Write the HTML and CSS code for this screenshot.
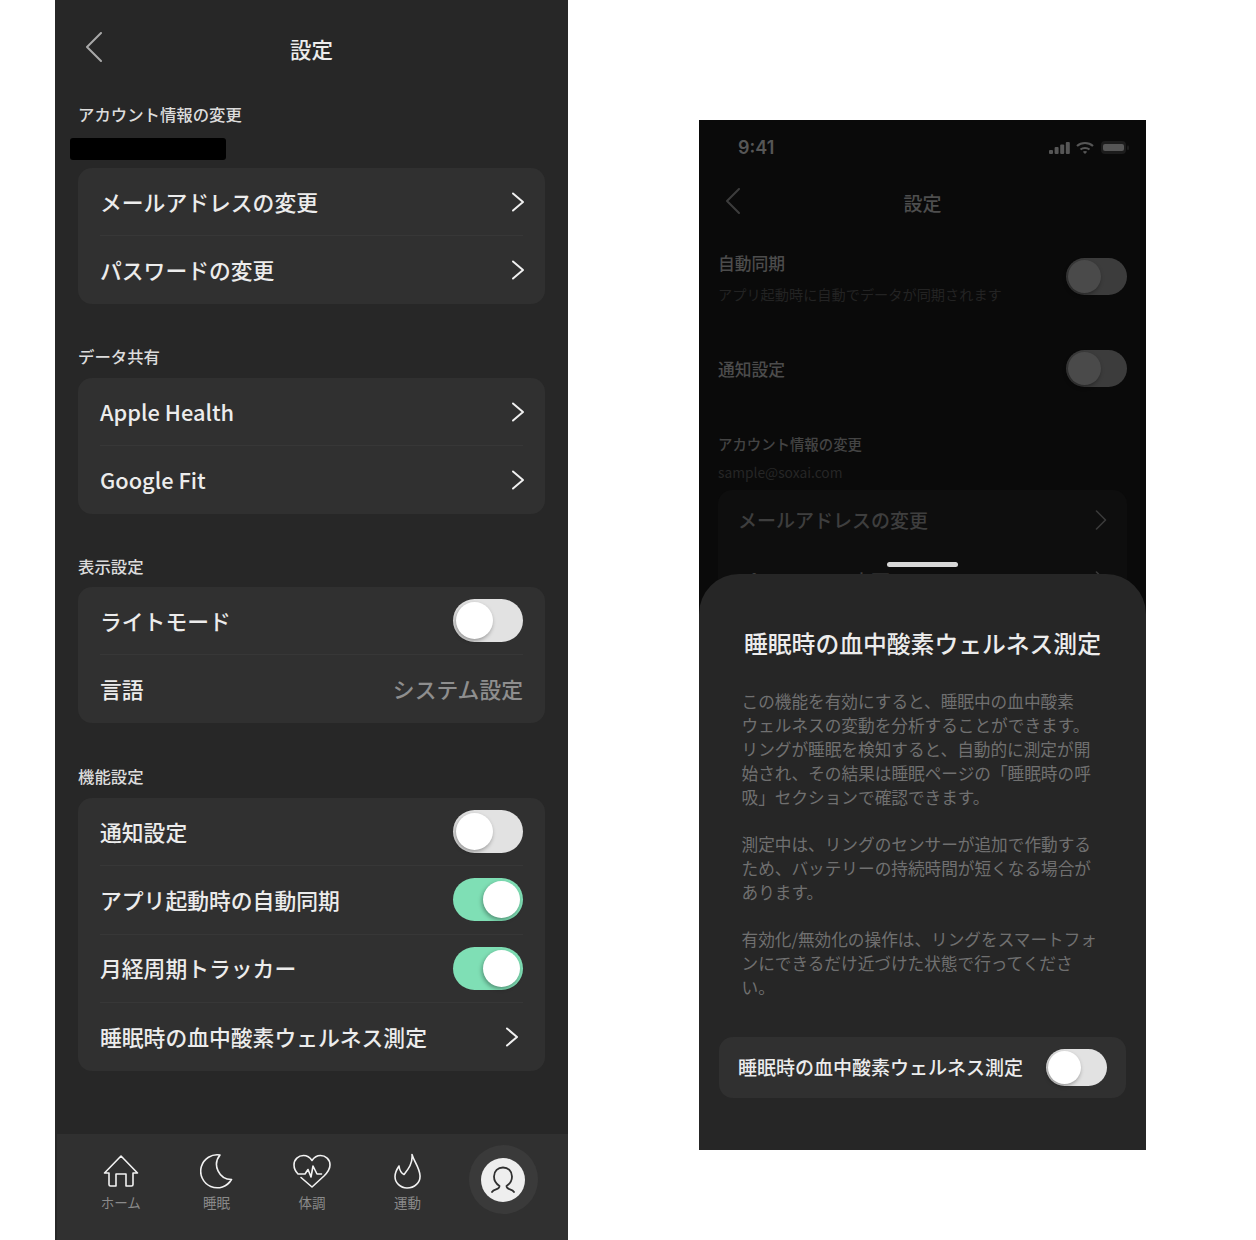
FILE: index.html
```html
<!DOCTYPE html>
<html lang="ja">

<head>
	<meta charset="UTF-8">
	<meta name="viewport" content="width=device-width, initial-scale=1.0">
	<title>設定</title>
	<link rel="stylesheet" href="styles.css">
</head>

<body>
	<!-- 左の設定画面 -->
	<div class="phone main-phone">
		<div class="topbar">
			<svg class="back" width="17" height="30" viewBox="0 0 17 30"><path d="M16 1 2 15l14 14"/></svg>
			<h1>設定</h1>
		</div>

		<div class="section first">
			<h2>アカウント情報の変更</h2>
			<div class="redacted"></div>
			<ul class="card">
				<li><span class="name">メールアドレスの変更</span><svg class="chev" width="14" height="20" viewBox="0 0 14 20"><path d="M2 1.500 12 10 2 18.500"/></svg></li>
				<li><span class="name">パスワードの変更</span><svg class="chev" width="14" height="20" viewBox="0 0 14 20"><path d="M2 1.500 12 10 2 18.500"/></svg></li>
			</ul>
		</div>

		<div class="section">
			<h2>データ共有</h2>
			<ul class="card">
				<li><span class="name">Apple Health</span><svg class="chev" width="14" height="20" viewBox="0 0 14 20"><path d="M2 1.500 12 10 2 18.500"/></svg></li>
				<li><span class="name">Google Fit</span><svg class="chev" width="14" height="20" viewBox="0 0 14 20"><path d="M2 1.500 12 10 2 18.500"/></svg></li>
			</ul>
		</div>

		<div class="section tight">
			<h2>表示設定</h2>
			<ul class="card">
				<li><span class="name">ライトモード</span><span class="toggle"><i></i></span></li>
				<li><span class="name">言語</span><span class="name value">システム設定</span></li>
			</ul>
		</div>

		<div class="section wide">
			<h2>機能設定</h2>
			<ul class="card long">
				<li><span class="name">通知設定</span><span class="toggle"><i></i></span></li>
				<li><span class="name">アプリ起動時の自動同期</span><span class="toggle on"><i></i></span></li>
				<li><span class="name">月経周期トラッカー</span><span class="toggle on"><i></i></span></li>
				<li><span class="name">睡眠時の血中酸素ウェルネス測定</span><svg class="chev inset" width="14" height="20" viewBox="0 0 14 20"><path d="M2 1.500 12 10 2 18.500"/></svg></li>
			</ul>
		</div>

		<div class="tabbar">
			<div class="tab">
				<svg width="36" height="33" viewBox="0 0 36 33"><path d="M7.500 31.500H13V19.500h10v12h5.500a1.500 1.500 0 0 0 1.500-1.500V18.500h4.500L18 1.500 1.500 18.500H6V30a1.500 1.500 0 0 0 1.500 1.500z"/></svg>
				<span>ホーム</span>
			</div>
			<div class="tab">
				<svg width="33" height="35" viewBox="0 0 33 35"><path d="M20 1.500A16.500 16.500 0 1 0 31.500 26 15 15 0 0 1 20 1.500z"/></svg>
				<span>睡眠</span>
			</div>
			<div class="tab">
				<svg width="38" height="34" viewBox="0 0 38 34"><path d="M8 23.500 19 33l12-11c4-4 6-7.500 6-11 0-5.500-4.500-9.500-9.500-9.500C24 1.500 21 3.500 19 6.500 17 3.500 14 1.500 10.500 1.500 5.500 1.500 1 5.500 1 11c0 3.500 1.500 6.500 4 9h7l3-4.500L18 23l2-11 4 8h4.500"/></svg>
				<span>体調</span>
			</div>
			<div class="tab">
				<svg width="27" height="36" viewBox="0 0 27 36"><path d="M18 1.500c2 7 7.500 13 8 21 .5 7-5.500 12.500-13 12.500-6.500 0-12-5-12-11.500 0-4 2-7.500 4-10.500.5 4 2 7 5 8.500 4-5 9-11 8-20z"/></svg>
				<span>運動</span>
			</div>
			<div class="tab">
				<div class="avatar">
					<div class="avatar-inner">
						<svg width="24" height="27" viewBox="0 0 24 27"><path d="M1 26c2-3.500 7.500-2 7.500-6C4.500 17.500 3 13.500 3 10.500 3 5 7 1.500 12 1.500S21 5 21 10.500c0 3-1.500 7-5.500 9.500 0 4 5.500 2.500 7.500 6"/></svg>
					</div>
				</div>
			</div>
		</div>
	</div>

	<!-- 右のモーダル画面 -->
	<div class="phone modal-phone">
		<div class="statusbar">
			<span class="time">9:41</span>
			<svg width="80" height="16" viewBox="0 0 80 16">
				<rect x="0" y="11" width="4" height="4" rx="1"/>
				<rect x="5.600" y="8" width="4" height="7" rx="1"/>
				<rect x="11.200" y="5.500" width="4" height="9.500" rx="1"/>
				<rect x="16.800" y="3" width="4" height="12" rx="1"/>
				<path class="wifi" d="M28 7c4.500-4 11.500-4 16 0M31.500 10.500c2.500-2 6.500-2 9 0"/>
				<path class="wifi-dot" d="M36 15 33.800 12.800c1.200-1 3.200-1 4.400 0z"/>
				<rect class="batt-bg" x="52" y="2" width="25" height="13" rx="4"/>
				<rect class="batt-bg" x="78" y="6.500" width="2" height="4.500" rx="1"/>
				<rect x="54" y="5" width="21" height="7" rx="2"/>
			</svg>
		</div>
		<div class="topbar small">
			<svg class="back" width="14" height="26" viewBox="0 0 14 26"><path d="M13 1 1 13l12 12"/></svg>
			<h1>設定</h1>
		</div>

		<div class="dim-row sync">
			<div>
				<div class="dim-title">自動同期</div>
				<div class="dim-sub">アプリ起動時に自動でデータが同期されます</div>
			</div>
			<span class="toggle dim"><i></i></span>
		</div>
		<div class="dim-row notify">
			<div class="dim-title">通知設定</div>
			<span class="toggle dim"><i></i></span>
		</div>

		<div class="dim-label">アカウント情報の変更</div>
		<div class="dim-mail">sample@soxai.com</div>
		<ul class="dim-card">
			<li>メールアドレスの変更<svg width="12" height="20" viewBox="0 0 12 20"><path d="M1.500 1 10.500 10 1.500 19"/></svg></li>
			<li>パスワードの変更<svg width="12" height="20" viewBox="0 0 12 20"><path d="M1.500 1 10.500 10 1.500 19"/></svg></li>
		</ul>

		<div class="handle"></div>
		<div class="sheet">
			<h3>睡眠時の血中酸素ウェルネス測定</h3>
			<div class="sheet-text">
				<p>この機能を有効にすると、睡眠中の血中酸素<br>ウェルネスの変動を分析することができます。<br>リングが睡眠を検知すると、自動的に測定が開<br>始され、その結果は睡眠ページの「睡眠時の呼<br>吸」セクションで確認できます。</p>
				<p>測定中は、リングのセンサーが追加で作動する<br>ため、バッテリーの持続時間が短くなる場合が<br>あります。</p>
				<p>有効化/無効化の操作は、リングをスマートフォ<br>ンにできるだけ近づけた状態で行ってくださ<br>い。</p>
			</div>
			<div class="sheet-row">
				<span class="sheet-name">睡眠時の血中酸素ウェルネス測定</span>
				<span class="toggle mid"><i></i></span>
			</div>
		</div>
	</div>
</body>

</html>
```

FILE: styles.css
```css
* {
	margin: 0;
	padding: 0;
	box-sizing: border-box;
}

body {
	display: flex;
	align-items: flex-start;
	background: #fff;
	font-family: "Noto Sans CJK JP", "Noto Sans", sans-serif;
	color: #ececec;
}

li {
	list-style: none;
}

svg path {
	fill: none;
	stroke-linecap: round;
	stroke-linejoin: round;
}

.phone {
	flex: none;
	overflow: hidden;
}

.main-phone {
	width: 513px;
	height: 1240px;
	margin-left: 55px;
	display: flex;
	flex-direction: column;
	background: #272727;
}

.modal-phone {
	position: relative;
	width: 447px;
	height: 1030px;
	margin-left: 131px;
	margin-top: 120px;
	padding: 0 19px;
	background: #0a0a0a;
}

/* ヘッダー */
.topbar {
	height: 103px;
	padding: 0 31px 6px;
	display: grid;
	grid-template-columns: 1fr auto 1fr;
	align-items: center;
}

.topbar h1 {
	font-size: 21.5px;
	line-height: 30px;
	font-weight: 500;
}

.topbar .back {
	margin: -4px 0 0 -1px;
}

.topbar .back path {
	stroke: #a8a8a8;
	stroke-width: 2;
}

.topbar.small {
	height: 60px;
	padding: 0 0 2px 8px;
	margin: 0 8px 0 0;
}

.topbar.small h1 {
	font-size: 19px;
	color: #4e4e4e;
}

.topbar.small .back {
	margin: -4px 0 0;
}

.topbar.small .back path {
	stroke: #3c3c3c;
}

/* セクション */
.section {
	margin-top: 41px;
	padding: 0 23px;
}

.section.first {
	margin-top: 0;
}

.section.wide {
	margin-top: 42px;
}

.section h2 {
	font-size: 16.4px;
	line-height: 22px;
	font-weight: 500;
	color: #dcdcdc;
	margin-bottom: 11px;
}

.section.tight h2 {
	margin-bottom: 10px;
}

.redacted {
	width: 156px;
	height: 22px;
	margin: 13px 0 8px -8px;
	background: #000;
	border-radius: 3px;
}

.card {
	background: #303030;
	border-radius: 14px;
}

.card li {
	height: 68px;
	margin: 0 22px;
	display: flex;
	align-items: center;
	justify-content: space-between;
	font-size: 21.8px;
	white-space: nowrap;
	border-bottom: 1px solid #373737;
}

.card li:last-child {
	border-bottom: 0;
}

.card.long li {
	height: 68.3px;
}

.name {
	padding-bottom: 1px;
	font-weight: 500;
}

.chev {
	margin-right: -2px;
}

.chev path {
	stroke: #f0f0f0;
	stroke-width: 2;
}

.chev.inset {
	margin-right: 4px;
}

.value {
	color: #8e8e8e;
}

/* トグル */
.toggle {
	flex: none;
	width: 70px;
	height: 43px;
	padding: 3px;
	display: flex;
	border-radius: 22px;
	background: #e2e2e2;
}

.toggle i {
	width: 37px;
	height: 37px;
	border-radius: 50%;
	background: #fff;
	box-shadow: -1px 2px 4px rgba(0, 0, 0, 0.35);
}

.toggle.on {
	justify-content: flex-end;
	background: #7fdfb5;
}

.toggle.mid,
.toggle.dim {
	width: 61px;
	height: 37px;
	padding: 2px;
	border-radius: 19px;
}

.toggle.mid i,
.toggle.dim i {
	width: 33px;
	height: 33px;
}

.toggle.dim {
	background: #3c3c3c;
}

.toggle.dim i {
	background: #4a4a4a;
}

/* タブバー */
.tabbar {
	margin: auto 0 0 2px;
	height: 106px;
	padding: 19px 17px 0 16px;
	display: grid;
	grid-template-columns: repeat(5, 1fr);
	background: #303030;
}

.tab {
	display: flex;
	flex-direction: column;
	align-items: center;
}

.tab > svg {
	height: 36px;
	margin-bottom: 3px;
}

.tab > svg path {
	stroke: #f2f2f2;
	stroke-width: 1.6;
}

.tab span {
	font-size: 13.5px;
	line-height: 20px;
	color: #8a8a8a;
}

.avatar {
	width: 69px;
	height: 69px;
	margin-top: -8px;
	border-radius: 50%;
	background: #3a3a3a;
	display: flex;
	align-items: center;
	justify-content: center;
}

.avatar-inner {
	width: 44px;
	height: 44px;
	border-radius: 50%;
	background: #eeeeee;
	display: flex;
	align-items: center;
	justify-content: center;
}

.avatar-inner path {
	stroke: #303030;
	stroke-width: 1.8;
}

/* 右画面: 暗くなった背景 */
.statusbar {
	height: 54px;
	padding: 0 0 0 20px;
	display: flex;
	align-items: center;
	justify-content: space-between;
}

.statusbar .time {
	font-family: Inter, "Liberation Sans", sans-serif;
	font-size: 18px;
	font-weight: 600;
	color: #565656;
}

.statusbar svg {
	margin-right: -2px;
	fill: #565656;
}

.statusbar svg .wifi {
	stroke: #565656;
	stroke-width: 2.2;
	stroke-linecap: butt;
}

.statusbar svg .wifi-dot {
	fill: #565656;
}

.statusbar svg .batt-bg {
	fill: #1c1c1c;
}

.dim-row {
	display: flex;
	justify-content: space-between;
}

.dim-row.sync {
	margin-top: 18px;
}

.dim-row.sync .toggle {
	margin-top: 6px;
}

.dim-row.notify {
	margin-top: 46px;
	align-items: center;
}

.dim-title {
	font-size: 16.8px;
	line-height: 22px;
	font-weight: 500;
	color: #4c4c4c;
}

.dim-sub {
	margin-top: 10px;
	font-size: 14.2px;
	line-height: 20px;
	color: #232323;
}

.dim-label {
	margin-top: 45px;
	font-size: 14.4px;
	line-height: 24px;
	font-weight: 500;
	color: #444;
}

.dim-mail {
	margin-top: 7px;
	font-size: 13.8px;
	line-height: 18px;
	color: #262626;
}

.dim-card {
	margin-top: 9px;
	background: #0e0e0e;
	border-radius: 14px;
}

.dim-card li {
	height: 61px;
	padding: 0 20px 2px;
	display: flex;
	align-items: center;
	justify-content: space-between;
	font-size: 19px;
	font-weight: 500;
	color: #3e3e3e;
}

.dim-card path {
	stroke: #3a3a3a;
	stroke-width: 1.6;
}

/* 右画面: ボトムシート */
.handle {
	position: absolute;
	top: 442px;
	left: 188px;
	width: 71px;
	height: 5px;
	border-radius: 3px;
	background: #d8d8d8;
}

.sheet {
	position: absolute;
	top: 454px;
	left: 0;
	right: 0;
	bottom: 0;
	padding-top: 52px;
	background: #262626;
	border-radius: 40px 40px 0 0;
}

.sheet h3 {
	font-size: 23.8px;
	line-height: 34px;
	font-weight: 500;
	text-align: center;
	white-space: nowrap;
}

.sheet-text {
	margin: 29px 0 0 42.5px;
	font-size: 16.65px;
	line-height: 24px;
	color: #707070;
	white-space: nowrap;
}

.sheet-text p {
	margin-bottom: 23px;
}

.sheet-row {
	margin: 38px 20px 0;
	height: 61px;
	padding: 0 19px 0 19px;
	display: flex;
	align-items: center;
	justify-content: space-between;
	background: #303030;
	border-radius: 14px;
	font-size: 19px;
	white-space: nowrap;
}

.sheet-name {
	padding-bottom: 2px;
	font-weight: 500;
}
```
